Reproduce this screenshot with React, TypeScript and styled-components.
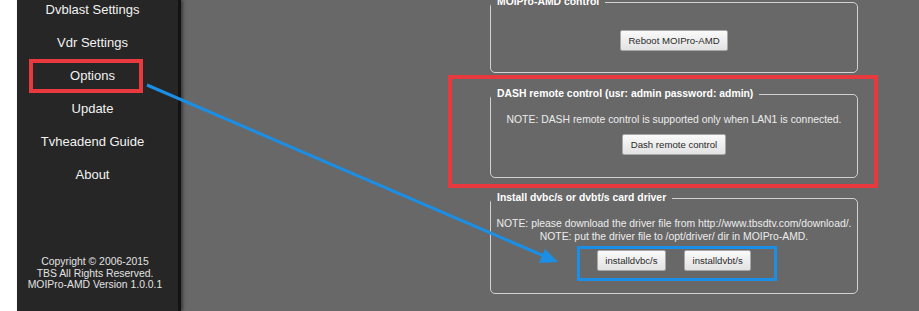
import React from "react";
import styled, { createGlobalStyle } from "styled-components";

const Global = createGlobalStyle`
  html, body { margin: 0; padding: 0; background: #ffffff; }
  body { font-family: Arial, "Liberation Sans", Helvetica, sans-serif; }
`;

const Page = styled.div`
  position: relative;
  display: flex;
  width: 919px;
  height: 311px;
  overflow: hidden;
  background: #ffffff;
`;

const Gutter = styled.div`
  width: 17px;
  flex: none;
  background: #ffffff;
`;

const Sidebar = styled.aside`
  width: 161px;
  flex: none;
  display: flex;
  flex-direction: column;
  background: #262626;
  border-right: 3px solid #131313;
  box-shadow: 2px 0 3px rgba(0, 0, 0, 0.45);
  position: relative;
  z-index: 1;
`;

const Nav = styled.nav`
  display: flex;
  flex-direction: column;
  margin-top: -7px;
  padding-right: 10px;
`;

const NavItem = styled.div`
  height: 33px;
  line-height: 33px;
  text-align: center;
  font-size: 13px;
  color: #f2f2f2;
  white-space: nowrap;
`;

const Copyright = styled.div`
  margin-top: auto;
  margin-bottom: 20px;
  padding-right: 5px;
  text-align: center;
  font-size: 10.4px;
  line-height: 11.7px;
  color: #e2e2e2;
  white-space: nowrap;
`;

const Main = styled.main`
  flex: 1;
  background: #686868;
  padding-left: 309px;
`;

const Column = styled.div`
  width: 368px;
  margin-top: -5px;
  display: flex;
  flex-direction: column;
`;

const Group = styled.fieldset<{ $top?: number; $pad: string }>`
  margin: ${(p) => p.$top ?? 0}px 0 0 0;
  padding: ${(p) => p.$pad};
  min-width: 0;
  border: 1px solid #d2d2d2;
  border-radius: 5px;
  text-align: center;
`;

const Legend = styled.legend`
  padding: 0 6px;
  margin-left: 0;
  font-size: 10.4px;
  font-weight: bold;
  line-height: 14px;
  color: #ffffff;
  text-align: left;
  white-space: nowrap;
`;

const Note = styled.div`
  font-size: 10.4px;
  line-height: 13px;
  color: #ececec;
  white-space: nowrap;
`;

const ButtonRow = styled.div<{ $top: number }>`
  display: flex;
  justify-content: center;
  gap: 18px;
  margin-top: ${(p) => p.$top}px;
`;

const Button = styled.button`
  height: 21px;
  padding: 0 7.5px;
  font-family: Arial, "Liberation Sans", sans-serif;
  font-size: 9.6px;
  color: #2a2a2a;
  background: linear-gradient(#fafafa, #e2e2e2);
  border: 1px solid #a8a8a8;
  border-radius: 2px;
  white-space: nowrap;
  cursor: pointer;
`;

const Highlight = styled.div<{
  $x: number;
  $y: number;
  $w: number;
  $h: number;
  $color: string;
  $thick: number;
}>`
  position: absolute;
  left: ${(p) => p.$x}px;
  top: ${(p) => p.$y}px;
  width: ${(p) => p.$w}px;
  height: ${(p) => p.$h}px;
  box-sizing: border-box;
  border: ${(p) => p.$thick}px solid ${(p) => p.$color};
  pointer-events: none;
  z-index: 2;
`;

const ArrowLayer = styled.svg`
  position: absolute;
  left: 0;
  top: 0;
  pointer-events: none;
  z-index: 3;
`;

const navItems = [
  "Dvblast Settings",
  "Vdr Settings",
  "Options",
  "Update",
  "Tvheadend Guide",
  "About",
];

export default function App() {
  return (
    <>
      <Global />
      <Page>
        <Gutter />
        <Sidebar>
          <Nav>
            {navItems.map((n) => (
              <NavItem key={n}>{n}</NavItem>
            ))}
          </Nav>
          <Copyright>
            Copyright © 2006-2015
            <br />
            TBS All Rights Reserved.
            <br />
            MOIPro-AMD Version 1.0.0.1
          </Copyright>
        </Sidebar>
        <Main>
          <Column>
            <Group $pad="21px 0 21px">
              <Legend>MOIPro-AMD control</Legend>
              <ButtonRow $top={0}>
                <Button>Reboot MOIPro-AMD</Button>
              </ButtonRow>
            </Group>
            <Group $top={14} $pad="12px 0 22px">
              <Legend>DASH remote control (usr: admin password: admin)</Legend>
              <Note>NOTE: DASH remote control is supported only when LAN1 is connected.</Note>
              <ButtonRow $top={8}>
                <Button>Dash remote control</Button>
              </ButtonRow>
            </Group>
            <Group $top={13} $pad="12px 0 22px">
              <Legend>Install dvbc/s or dvbt/s card driver</Legend>
              <Note>
                NOTE: please download the driver file from http://www.tbsdtv.com/download/.
              </Note>
              <Note>NOTE: put the driver file to /opt/driver/ dir in MOIPro-AMD.</Note>
              <ButtonRow $top={7}>
                <Button>installdvbc/s</Button>
                <Button>installdvbt/s</Button>
              </ButtonRow>
            </Group>
          </Column>
        </Main>

        <Highlight $x={29} $y={59} $w={114} $h={34} $color="#e8393e" $thick={4} />
        <Highlight $x={448} $y={75} $w={430} $h={113} $color="#e8393e" $thick={4} />
        <Highlight $x={577} $y={246} $w={200} $h={35} $color="#1b8fe6" $thick={3} />

        <ArrowLayer width={919} height={311} viewBox="0 0 919 311">
          <line x1={147} y1={85} x2={544} y2={256} stroke="#1b8fe6" strokeWidth={3} />
          <polygon points="558,262 545,249 539,263" fill="#1b8fe6" />
        </ArrowLayer>
      </Page>
    </>
  );
}
